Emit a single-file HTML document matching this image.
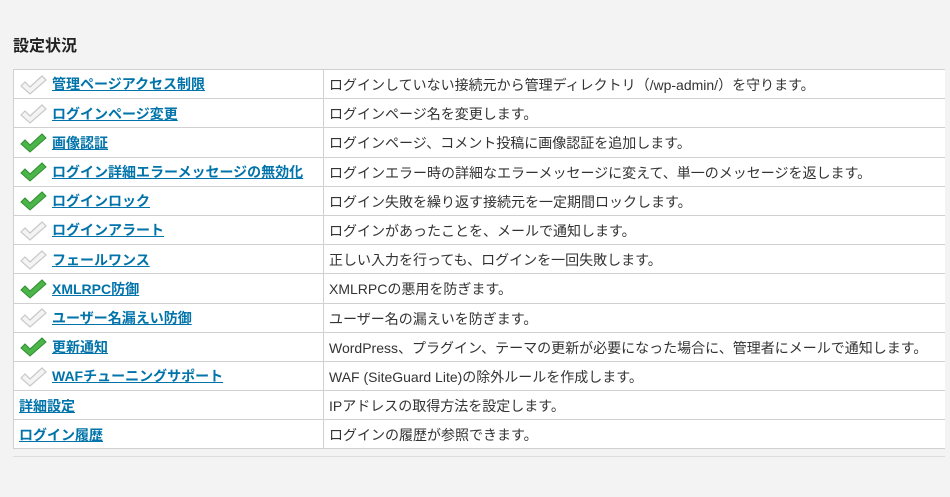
<!DOCTYPE html>
<html><head><meta charset="utf-8"><style>
body{margin:0;background:#f3f3f3;width:950px;height:497px;overflow:hidden;font-family:"Liberation Sans","Noto Sans CJK JP",sans-serif;color:#333;}
h2{position:absolute;left:13px;top:32px;margin:0;font-size:16px;font-weight:bold;color:#222;}
table{position:absolute;left:13px;top:69px;width:932px;border-collapse:collapse;background:#fff;font-size:14px;}
td{border:1px solid #d0d0d0;height:29.2px;padding:2px 5px 0;box-sizing:border-box;white-space:nowrap;}
td:last-child{border-right:none}
td.a{width:310px;padding-left:5px}
a{color:#0073aa;font-weight:bold;text-decoration:underline;}
svg{vertical-align:middle;margin-right:5px;margin-top:-2px}
hr{position:absolute;left:13px;top:456px;width:932px;margin:0;border:0;border-top:1px solid #ddd;}
</style></head><body>
<svg width="0" height="0" style="position:absolute"><defs>
<symbol id="g" viewBox="0 0 28 22"><path d="M2 12 L6 8 L11 13 L23 2 L27 6 L11 20 Z" fill="#4cb54a" stroke="#2f8f2f" stroke-width="1"/></symbol>
<symbol id="w" viewBox="0 0 28 22"><path d="M2 12 L6 8 L11 13 L23 2 L27 6 L11 20 Z" fill="#f4f4f4" stroke="#c8c8c8" stroke-width="1.2"/></symbol>
</defs></svg>
<h2>設定状況</h2>
<table>
<tr><td class="a"><svg width="28" height="22"><use href="#w"/></svg><a>管理ページアクセス制限</a></td><td>ログインしていない接続元から管理ディレクトリ（/wp-admin/）を守ります。</td></tr>
<tr><td class="a"><svg width="28" height="22"><use href="#w"/></svg><a>ログインページ変更</a></td><td>ログインページ名を変更します。</td></tr>
<tr><td class="a"><svg width="28" height="22"><use href="#g"/></svg><a>画像認証</a></td><td>ログインページ、コメント投稿に画像認証を追加します。</td></tr>
<tr><td class="a"><svg width="28" height="22"><use href="#g"/></svg><a>ログイン詳細エラーメッセージの無効化</a></td><td>ログインエラー時の詳細なエラーメッセージに変えて、単一のメッセージを返します。</td></tr>
<tr><td class="a"><svg width="28" height="22"><use href="#g"/></svg><a>ログインロック</a></td><td>ログイン失敗を繰り返す接続元を一定期間ロックします。</td></tr>
<tr><td class="a"><svg width="28" height="22"><use href="#w"/></svg><a>ログインアラート</a></td><td>ログインがあったことを、メールで通知します。</td></tr>
<tr><td class="a"><svg width="28" height="22"><use href="#w"/></svg><a>フェールワンス</a></td><td>正しい入力を行っても、ログインを一回失敗します。</td></tr>
<tr><td class="a"><svg width="28" height="22"><use href="#g"/></svg><a>XMLRPC防御</a></td><td>XMLRPCの悪用を防ぎます。</td></tr>
<tr><td class="a"><svg width="28" height="22"><use href="#w"/></svg><a>ユーザー名漏えい防御</a></td><td>ユーザー名の漏えいを防ぎます。</td></tr>
<tr><td class="a"><svg width="28" height="22"><use href="#g"/></svg><a>更新通知</a></td><td>WordPress、プラグイン、テーマの更新が必要になった場合に、管理者にメールで通知します。</td></tr>
<tr><td class="a"><svg width="28" height="22"><use href="#w"/></svg><a>WAFチューニングサポート</a></td><td>WAF (SiteGuard Lite)の除外ルールを作成します。</td></tr>
<tr><td class="a"><a>詳細設定</a></td><td>IPアドレスの取得方法を設定します。</td></tr>
<tr><td class="a"><a>ログイン履歴</a></td><td>ログインの履歴が参照できます。</td></tr>
</table>
<hr>
</body></html>
